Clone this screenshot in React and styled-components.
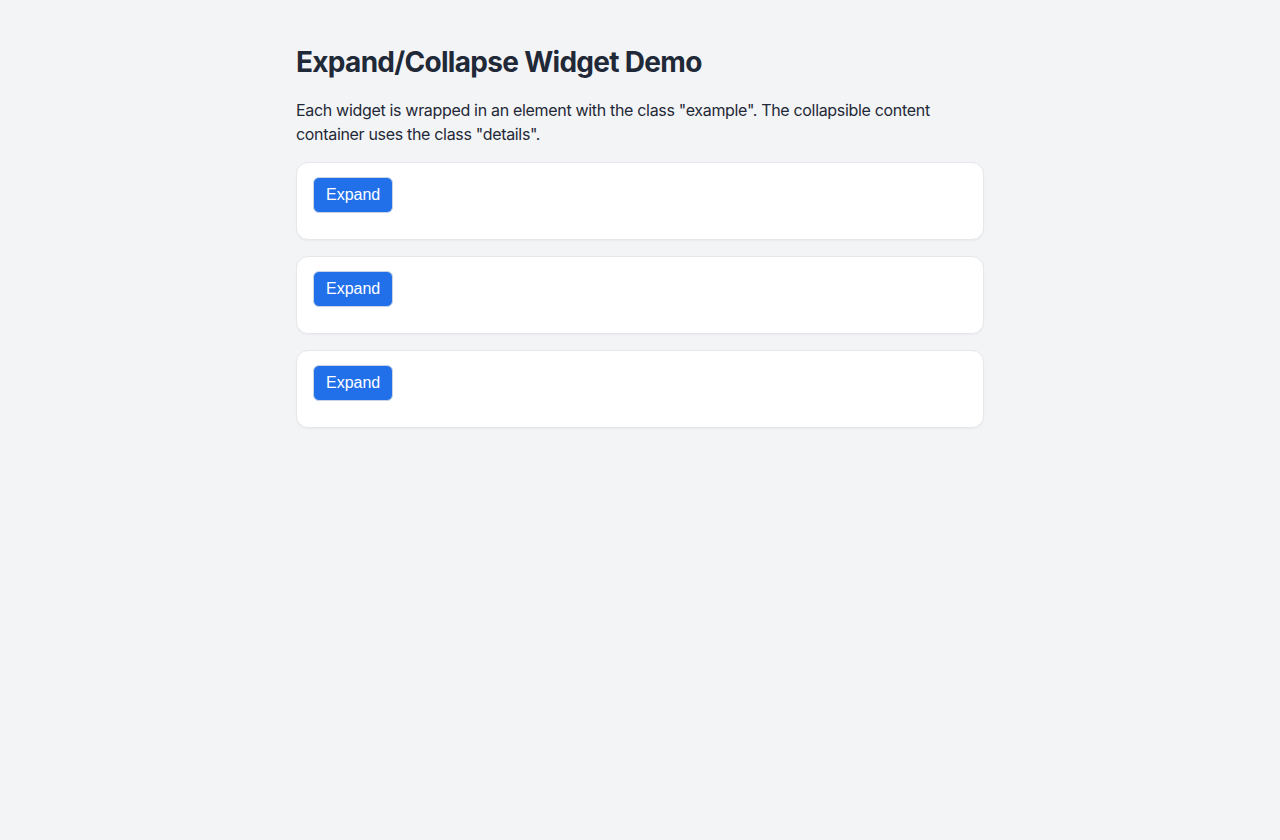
import React, { useState } from "react";
import styled, { createGlobalStyle } from "styled-components";

const GlobalStyle = createGlobalStyle`
  html, body {
    margin: 0;
    padding: 0;
    background: #f3f4f6;
    color: #1f2937;
    font-family: Inter, "Noto Sans", sans-serif;
  }
`;

const Page = styled.main`
  max-width: 688px;
  margin: 0 auto;
  padding: 40px 0;
`;

const Title = styled.h1`
  font-size: 28px;
  font-weight: 700;
  line-height: 1.2;
  letter-spacing: -0.7px;
  margin: 6px 0 18px;
  color: #1f2937;
`;

const Intro = styled.p`
  font-size: 16px;
  line-height: 24px;
  letter-spacing: -0.32px;
  margin: 0 0 16px;
`;

const List = styled.div`
  display: flex;
  flex-direction: column;
  gap: 16px;
`;

const Example = styled.section`
  background: #fff;
  border: 1px solid #e5e7eb;
  border-radius: 12px;
  padding: 14px 16px 26px;
  box-shadow: 0 1px 2px rgba(0, 0, 0, 0.04);
`;

const Toggle = styled.button`
  font-family: "Liberation Sans", Arial, sans-serif;
  font-size: 16px;
  line-height: 18px;
  color: #fff;
  background: #2170ea;
  border: 1px solid #c7d3e6;
  border-radius: 6px;
  padding: 8px 12px;
  cursor: pointer;
`;

const Details = styled.div`
  display: ${(p) => (p.open ? "block" : "none")};
  margin-top: 12px;
  font-size: 15px;
  line-height: 22px;
`;

function Widget({ text }) {
  const [open, setOpen] = useState(false);
  return (
    <Example className="example">
      <Toggle onClick={() => setOpen(!open)}>{open ? "Collapse" : "Expand"}</Toggle>
      <Details className="details" open={open}>
        {text}
      </Details>
    </Example>
  );
}

export default function App() {
  return (
    <>
      <GlobalStyle />
      <Page>
        <Title>Expand/Collapse Widget Demo</Title>
        <Intro>
          Each widget is wrapped in an element with the class "example". The collapsible content
          container uses the class "details".
        </Intro>
        <List>
          <Widget text="First widget details." />
          <Widget text="Second widget details." />
          <Widget text="Third widget details." />
        </List>
      </Page>
    </>
  );
}
